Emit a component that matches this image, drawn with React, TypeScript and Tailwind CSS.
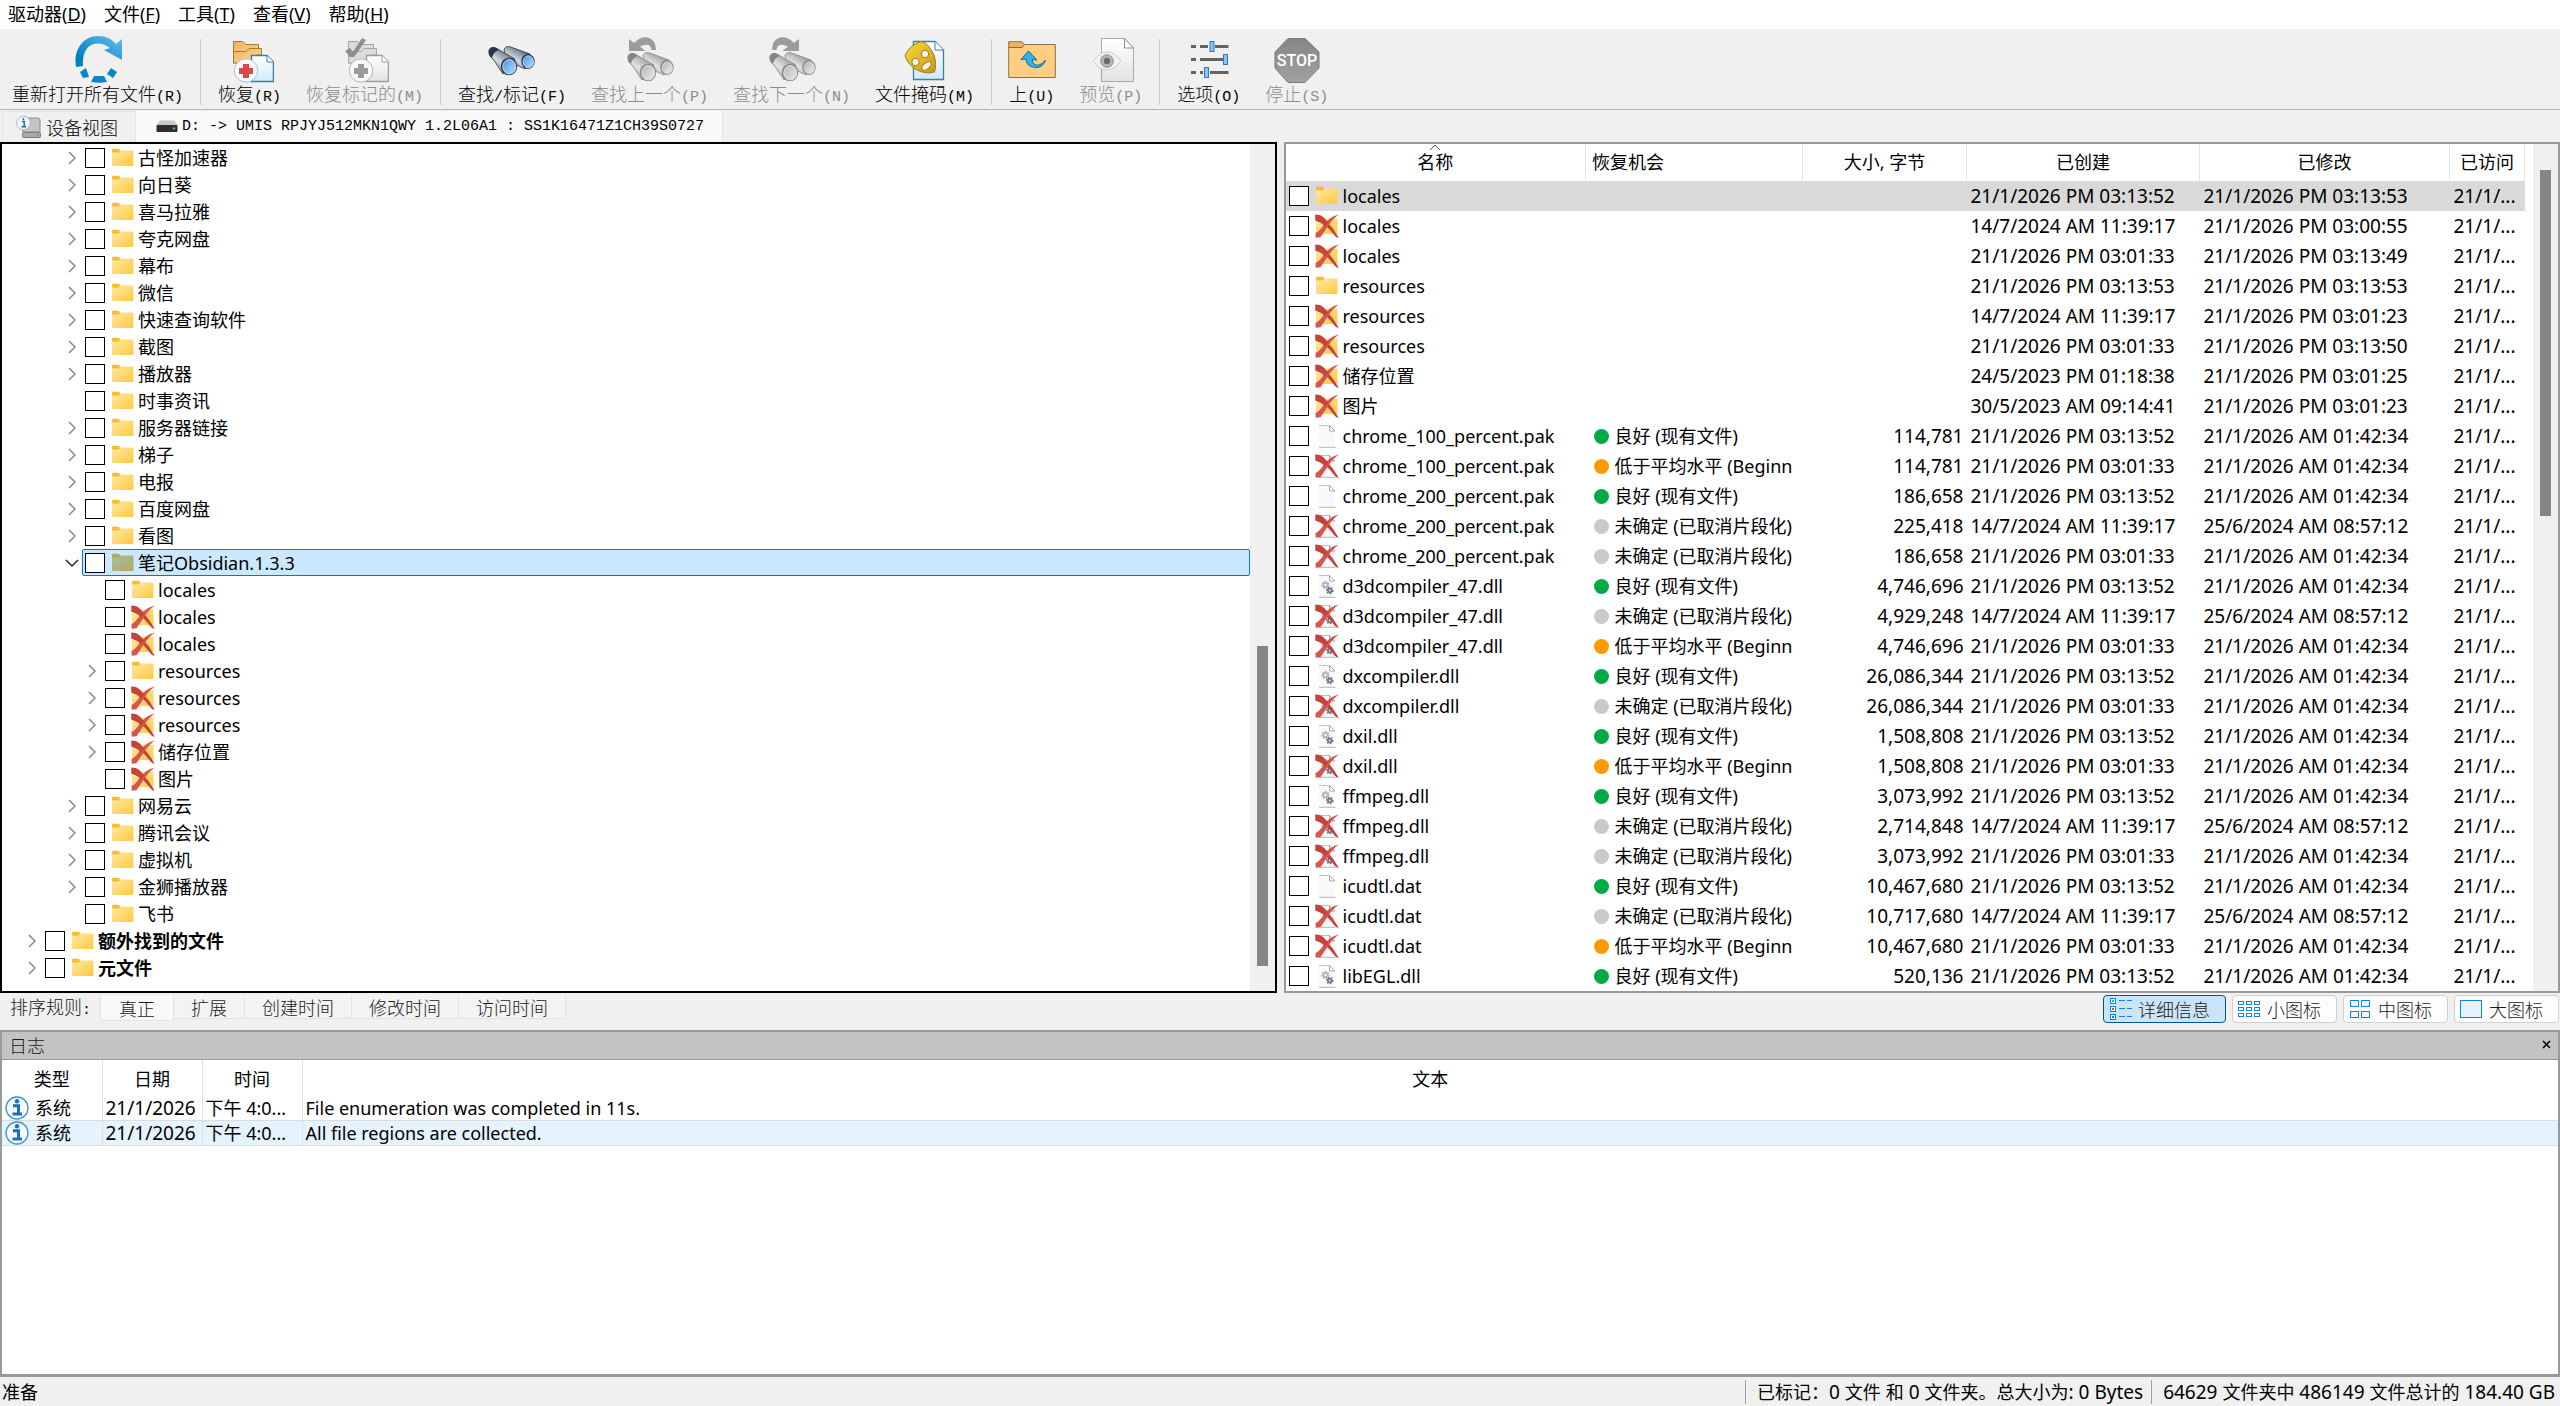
import type { ReactNode } from "react";

const UI = 'font-["Noto_Sans","Noto_Sans_CJK_SC",sans-serif]';
const BITMAP = 'font-["Noto_Sans_CJK_SC",sans-serif] text-[18px] font-light';
const MONO = 'font-["Liberation_Mono",monospace] text-[15px]';

/* Text whose Latin runs take their own face and size beside the Chinese glyphs. */
function Runs({ text, latin }: { text: string; latin: string }) {
  return (
    <>
      {text.split(/([\x20-\x7e]+)/).map((run, i) =>
        i % 2 === 1 ? (
          <span key={i} className={latin}>
            {run}
          </span>
        ) : (
          run
        ),
      )}
    </>
  );
}

function CheckBox({ label }: { label?: string }) {
  return (
    <input
      type="checkbox"
      aria-label={label}
      className="size-5 shrink-0 appearance-none border border-black bg-white checked:bg-sky-600"
    />
  );
}

/* ---------- small item icons ---------- */

type Kind = "folder" | "folderX" | "file" | "fileX" | "dll" | "dllX" | "folderSel";

function Gear({ x, y, r, c }: { x: number; y: number; r: number; c: string }) {
  return (
    <g stroke={c} fill="none">
      <circle cx={x} cy={y} r={r} strokeWidth="1.8" />
      <circle cx={x} cy={y} r={r + 1.3} strokeWidth="1.4" strokeDasharray="1.6 1.5" />
    </g>
  );
}

function ItemIcon({ kind }: { kind: Kind }) {
  const isFolder = kind.startsWith("folder");
  const crossed = kind.endsWith("X");
  return (
    <svg width="24" height="24" viewBox="0 0 24 24" className="shrink-0" aria-hidden="true">
      {isFolder && (
        <g>
          <path
            d="M1 5.5V4q0-1.200 1.200-1.200H7q1 0 1.700 1L9.500 5.500Z"
            fill={kind === "folderSel" ? "#b3a545" : "#f9b821"}
          />
          <rect
            x="1"
            y="4.500"
            width="21.500"
            height="15.500"
            rx="1"
            fill={kind === "folderSel" ? "url(#folderSelFill)" : "url(#folderFill)"}
          />
          <path d="M1 4.500H9.300Q8.500 6.500 7 6.500H2Q1 6.500 1 5.500Z" fill={kind === "folderSel" ? "#b3a545" : "#f9b821"} />
        </g>
      )}
      {!isFolder && (
        <g>
          <rect x="4" y="2" width="16" height="21" fill="#f9f9f9" />
          <path d="M13 1h7v7h-7z" fill="#fff" />
          <path d="M4 1.500h10.500M4 23.300h16.500" stroke="#c3c3c3" strokeWidth="1.200" fill="none" />
          <path d="M14.500 1.500V7H20Z" fill="#fdfdfd" stroke="#a5a5a5" />
        </g>
      )}
      {kind.startsWith("dll") && (
        <g>
          <Gear x={10.500} y={11} r={2.200} c="#a9b3bd" />
          <Gear x={14.800} y={16.500} r={1.800} c="#6e7780" />
        </g>
      )}
      {crossed && (
        <g>
          <path
            d="M0.500 0.800Q5.500 0 9.500 4.500Q18 13.500 23.800 23.800Q21.500 24 19.500 21.500Q12.500 12 5.500 8.500Q2 7 0.500 6.500Z"
            fill="#c3443b"
          />
          <path
            d="M23.800 0.500Q17.500 5 12.800 12.500Q8 19.500 5.500 23.300L0.700 23.800L0.500 19Q4.500 17.500 8.500 11Q14 3 23.800 0.500Z"
            fill="#d8554d"
          />
          <path d="M0.500 0.800Q5.500 0 9.500 4.500L13.500 9L10 12Q7 9 5.500 8.500Q2 7 0.500 6.500Z" fill="#c3443b" />
        </g>
      )}
    </svg>
  );
}

function SharedDefs() {
  return (
    <svg width="0" height="0" className="absolute" aria-hidden="true">
      <defs>
        <linearGradient id="folderFill" x1="0" y1="0" x2="1" y2="1">
          <stop offset="0" stopColor="#ffe9a6" />
          <stop offset="1" stopColor="#ffc93f" />
        </linearGradient>
        <linearGradient id="folderSelFill" x1="0" y1="0" x2="1" y2="1">
          <stop offset="0" stopColor="#a9bda5" />
          <stop offset="1" stopColor="#afab5c" />
        </linearGradient>
        <linearGradient id="arc" x1="0" y1="1" x2="1" y2="0">
          <stop offset="0.200" stopColor="#0081c2" />
          <stop offset="1" stopColor="#68bdec" />
        </linearGradient>
        <linearGradient id="tan" x1="0" y1="0" x2="1" y2="1">
          <stop offset="0" stopColor="#ecb55c" />
          <stop offset="1" stopColor="#ffd995" />
        </linearGradient>
        <linearGradient id="page" x1="0" y1="0" x2="0" y2="1">
          <stop offset="0" stopColor="#ffffff" />
          <stop offset="1" stopColor="#cfeafa" />
        </linearGradient>
        <linearGradient id="pageGray" x1="0" y1="0" x2="0" y2="1">
          <stop offset="0" stopColor="#ffffff" />
          <stop offset="1" stopColor="#e2e2e2" />
        </linearGradient>
        <linearGradient id="barrel" x1="0" y1="1" x2="0.700" y2="0">
          <stop offset="0" stopColor="#3c4555" />
          <stop offset="0.500" stopColor="#d5d9e0" />
          <stop offset="0.800" stopColor="#7f8999" />
          <stop offset="1" stopColor="#2f3a4d" />
        </linearGradient>
        <linearGradient id="barrelGray" x1="0" y1="1" x2="0.700" y2="0">
          <stop offset="0" stopColor="#7c7c7c" />
          <stop offset="0.500" stopColor="#e2e2e2" />
          <stop offset="1" stopColor="#8a8a8a" />
        </linearGradient>
        <linearGradient id="lens" x1="0" y1="0" x2="1" y2="1">
          <stop offset="0" stopColor="#3f97ea" />
          <stop offset="1" stopColor="#b5e0ff" />
        </linearGradient>
        <linearGradient id="lensGray" x1="0" y1="0" x2="1" y2="1">
          <stop offset="0" stopColor="#b4b4b4" />
          <stop offset="1" stopColor="#ededed" />
        </linearGradient>
        <linearGradient id="gold" x1="0" y1="0" x2="1" y2="1">
          <stop offset="0" stopColor="#f7dc35" />
          <stop offset="1" stopColor="#c9981c" />
        </linearGradient>
        <linearGradient id="stop" x1="0" y1="0" x2="0" y2="1">
          <stop offset="0" stopColor="#858585" />
          <stop offset="1" stopColor="#a2a2a2" />
        </linearGradient>
      </defs>
    </svg>
  );
}

/* ---------- toolbar icons ---------- */

function Icon48({ children }: { children: ReactNode }) {
  return (
    <svg width="48" height="48" viewBox="0 0 48 48" className="-mx-1 shrink-0" aria-hidden="true">
      {children}
    </svg>
  );
}

function ReopenIcon() {
  return (
    <Icon48>
      <path
        d="M2 32C-1 15 9 1 24 1C32 1 38 4 42 9L48 4V25L30 15L36 13C32 10 29 8.500 24 8.500C13 8.500 8 18 9 31Z"
        fill="url(#arc)"
      />
      <path d="M12 33L15 42L9 43L6 37Z M37 33L43 37L39 43L33 39Z M20 41H30L33 47Q25 48.500 17 47Z" fill="#0a86c6" />
    </Icon48>
  );
}

function RecoverIcon({ gray }: { gray?: boolean }) {
  const line = gray ? "#a3a3a3" : "#a87a2c";
  const fill = gray ? "#dcdcdc" : "url(#tan)";
  const blue = gray ? "#9d9d9d" : "#3d7ea8";
  return (
    <Icon48>
      <path d="M7.500 6.500H17L20 9.500H32.500V28H7.500Z" fill={fill} stroke={line} />
      <path d="M7.500 16.500H20L23 13.500H35.500V20H30L28 28H7.500Z" fill={fill} stroke={line} />
      <path d="M25.500 20.500H41L47.500 27V46.500H25.500Z" fill={gray ? "url(#pageGray)" : "url(#page)"} stroke={blue} strokeWidth="1.500" />
      <path d="M41 20.500V27H47.500" fill="#fff" stroke={blue} />
      <circle cx="20" cy="35.500" r="11.700" fill="#f8f8f8" stroke={gray ? "#b5b5b5" : "#a9c4d4"} />
      <path d="M17 29H23V33H27V39H23V43H17V39H13V33H17Z" fill={gray ? "#9a9a9a" : "#d9484c"} />
      {gray && <path d="M4 16L9 13L12 17L21 3L25 5L13 22H9Z" fill="#8d8d8d" />}
    </Icon48>
  );
}

function Binoculars({ gray }: { gray?: boolean }) {
  const body = gray ? "url(#barrelGray)" : "url(#barrel)";
  const dark = gray ? "#858585" : "#27344a";
  const lens = gray ? "url(#lensGray)" : "url(#lens)";
  return (
    <g>
      <path d="M16 3Q19 -1 24 1.500L42 8L37 23L18 14Z" fill={body} stroke={dark} strokeWidth="0.800" />
      <ellipse cx="40" cy="15.500" rx="6.700" ry="7.500" fill={dark} />
      <ellipse cx="40.300" cy="15.800" rx="5.200" ry="6" fill={lens} stroke={gray ? "#d5d5d5" : "#c7d3df"} />
      <path d="M1 4Q3 0 8 2L27 13L15 28L5 13Q0 10 1 4Z" fill={body} stroke={dark} strokeWidth="0.800" />
      <path d="M1 4Q3 0 8 2L11 4Q5 6 4 12Q0 9 1 4Z" fill={dark} />
      <ellipse cx="21" cy="20.500" rx="8.200" ry="8.800" fill={dark} />
      <ellipse cx="21.300" cy="20.800" rx="6.500" ry="7.200" fill={lens} stroke={gray ? "#e4e4e4" : "#d3dde6"} />
    </g>
  );
}

function FindIcon() {
  return (
    <Icon48>
      <g transform="translate(0 11)">
        <Binoculars />
      </g>
    </Icon48>
  );
}

function FindStepIcon({ next }: { next?: boolean }) {
  return (
    <Icon48>
      <g transform="translate(1 17)">
        <Binoculars gray />
      </g>
      <g transform={next ? "translate(34 0) scale(-1 1)" : "translate(0 0)"}>
        <path d="M3 4L8 8Q14 1.500 22 2.500Q30 5 30 15H25.500Q24.500 6.500 14 11.500L19.500 16H3Z" fill="#9b9b9b" />
      </g>
    </Icon48>
  );
}

function MaskIcon() {
  return (
    <Icon48>
      <path d="M12.500 6.500H34L42.500 15V44.500H12.500Z" fill="url(#page)" stroke="#3d7ea8" strokeWidth="1.300" />
      <path d="M34 6.500V15H42.500" fill="#fff" stroke="#3d7ea8" />
      <path d="M20 6.500Q27 7 33 20Q36 30 33.500 37Q25 40 14 34Q5 27 4 20Q10 9 20 6.500Z" fill="url(#gold)" stroke="#a57d16" />
      <circle cx="24" cy="19" r="3.700" fill="#f5f5f0" stroke="#a57d16" />
      <circle cx="14.500" cy="27" r="3.700" fill="#f5f5f0" stroke="#a57d16" />
      <ellipse cx="25.500" cy="31" rx="5.500" ry="3" transform="rotate(-40 25.500 31)" fill="#f5f5f0" stroke="#a57d16" />
    </Icon48>
  );
}

function UpIcon() {
  return (
    <Icon48>
      <path d="M0.700 6.700H14L16.500 9.500L14 13H0.700Z" fill="#f0b062" stroke="#93703a" />
      <path d="M0.700 12.500H14L17 9.500H47.300V42.500H0.700Z" fill="#ffce83" stroke="#93703a" />
      <path d="M20.500 16L29 25L24 24.500Q25 31 31 30Q35 29 37.500 25Q35 33 28 32.500Q18 32 18 24L13 24.500Z" fill="#2fb4ea" stroke="#17699a" />
    </Icon48>
  );
}

function PreviewIcon() {
  return (
    <Icon48>
      <path d="M14.500 3.500H37.500L46.500 13V46.500H14.500Z" fill="url(#pageGray)" stroke="#a8a8a8" />
      <path d="M37.500 3.500V13H46.500Z" fill="#fff" stroke="#8f8f8f" />
      <path d="M6 26Q13 17 20 17Q27 17 34 26Q27 35 20 35Q13 35 6 26Z" fill="#f3f3f3" stroke="#cdcdcd" />
      <circle cx="20" cy="26" r="6.300" fill="#b5b5b5" stroke="#8e8e8e" />
      <circle cx="20" cy="26" r="3.200" fill="#6b6b6b" />
    </Icon48>
  );
}

function OptionsIcon() {
  return (
    <Icon48>
      <path
        d="M6 11.500H11M15 11.500H23M30 11.500H43.500M6 24.500H11M15 24.500H38M6 37.500H11M15 37.500H18M25 37.500H43.500"
        stroke="#636363"
        strokeWidth="3"
      />
      <g fill="#86c5ff" stroke="#3577b4">
        <rect x="25" y="6.500" width="4" height="10" />
        <rect x="38.500" y="19.500" width="4" height="10" />
        <rect x="19.500" y="32.500" width="4" height="10" />
      </g>
    </Icon48>
  );
}

function StopIcon() {
  return (
    <Icon48>
      <path d="M15 3.500H32L46 17V33L32 47.500H15L2 33V17Z" fill="url(#stop)" stroke="#7b7b7b" />
      <text
        x="24"
        y="31"
        textAnchor="middle"
        fill="#fff"
        className='font-["Roboto",sans-serif] text-[16px] font-medium'
      >
        STOP
      </text>
    </Icon48>
  );
}

function ToolButton({ icon, label, disabled }: { icon: ReactNode; label: string; disabled?: boolean }) {
  return (
    <button
      type="button"
      disabled={disabled}
      className={`flex flex-col items-center px-3 leading-5 whitespace-nowrap text-black disabled:text-[#8c8c8c] ${BITMAP}`}
    >
      {icon}
      <span>
        <Runs text={label} latin={MONO} />
      </span>
    </button>
  );
}

function ToolSeparator() {
  return <div className="mx-1 my-1 w-px bg-[#cdcdcd]" />;
}

/* ---------- data ---------- */

type Node = { name: string; depth: number; open?: boolean; arrow?: boolean; kind?: Kind; bold?: boolean };

const tree: Node[] = [
  { name: "古怪加速器", depth: 2, arrow: true },
  { name: "向日葵", depth: 2, arrow: true },
  { name: "喜马拉雅", depth: 2, arrow: true },
  { name: "夸克网盘", depth: 2, arrow: true },
  { name: "幕布", depth: 2, arrow: true },
  { name: "微信", depth: 2, arrow: true },
  { name: "快速查询软件", depth: 2, arrow: true },
  { name: "截图", depth: 2, arrow: true },
  { name: "播放器", depth: 2, arrow: true },
  { name: "时事资讯", depth: 2 },
  { name: "服务器链接", depth: 2, arrow: true },
  { name: "梯子", depth: 2, arrow: true },
  { name: "电报", depth: 2, arrow: true },
  { name: "百度网盘", depth: 2, arrow: true },
  { name: "看图", depth: 2, arrow: true },
  { name: "笔记Obsidian.1.3.3", depth: 2, arrow: true, open: true, kind: "folderSel" },
  { name: "locales", depth: 3 },
  { name: "locales", depth: 3, kind: "folderX" },
  { name: "locales", depth: 3, kind: "folderX" },
  { name: "resources", depth: 3, arrow: true },
  { name: "resources", depth: 3, arrow: true, kind: "folderX" },
  { name: "resources", depth: 3, arrow: true, kind: "folderX" },
  { name: "储存位置", depth: 3, arrow: true, kind: "folderX" },
  { name: "图片", depth: 3, kind: "folderX" },
  { name: "网易云", depth: 2, arrow: true },
  { name: "腾讯会议", depth: 2, arrow: true },
  { name: "虚拟机", depth: 2, arrow: true },
  { name: "金狮播放器", depth: 2, arrow: true },
  { name: "飞书", depth: 2 },
  { name: "额外找到的文件", depth: 0, arrow: true, bold: true },
  { name: "元文件", depth: 0, arrow: true, bold: true },
];

const indents = ["pl-5", "pl-10", "pl-[60px]", "pl-20"];

type Chance = "good" | "low" | "unknown";
const chanceText: Record<Chance, string> = {
  good: "良好 (现有文件)",
  low: "低于平均水平 (Beginn",
  unknown: "未确定 (已取消片段化)",
};
const chanceDot: Record<Chance, string> = {
  good: "bg-[#00aa44]",
  low: "bg-[#ff9900]",
  unknown: "bg-[#c9c9c9]",
};

type Row = [string, Kind, Chance | null, string, string, string];
const A = "21/1/2026 PM 03:13:52";
const B = "21/1/2026 PM 03:01:33";
const C = "14/7/2024 AM 11:39:17";
const M = "21/1/2026 AM 01:42:34";
const N = "25/6/2024 AM 08:57:12";

const files: Row[] = [
  ["locales", "folder", null, "", A, "21/1/2026 PM 03:13:53"],
  ["locales", "folderX", null, "", C, "21/1/2026 PM 03:00:55"],
  ["locales", "folderX", null, "", B, "21/1/2026 PM 03:13:49"],
  ["resources", "folder", null, "", "21/1/2026 PM 03:13:53", "21/1/2026 PM 03:13:53"],
  ["resources", "folderX", null, "", C, "21/1/2026 PM 03:01:23"],
  ["resources", "folderX", null, "", B, "21/1/2026 PM 03:13:50"],
  ["储存位置", "folderX", null, "", "24/5/2023 PM 01:18:38", "21/1/2026 PM 03:01:25"],
  ["图片", "folderX", null, "", "30/5/2023 AM 09:14:41", "21/1/2026 PM 03:01:23"],
  ["chrome_100_percent.pak", "file", "good", "114,781", A, M],
  ["chrome_100_percent.pak", "fileX", "low", "114,781", B, M],
  ["chrome_200_percent.pak", "file", "good", "186,658", A, M],
  ["chrome_200_percent.pak", "fileX", "unknown", "225,418", C, N],
  ["chrome_200_percent.pak", "fileX", "unknown", "186,658", B, M],
  ["d3dcompiler_47.dll", "dll", "good", "4,746,696", A, M],
  ["d3dcompiler_47.dll", "dllX", "unknown", "4,929,248", C, N],
  ["d3dcompiler_47.dll", "dllX", "low", "4,746,696", B, M],
  ["dxcompiler.dll", "dll", "good", "26,086,344", A, M],
  ["dxcompiler.dll", "dllX", "unknown", "26,086,344", B, M],
  ["dxil.dll", "dll", "good", "1,508,808", A, M],
  ["dxil.dll", "dllX", "low", "1,508,808", B, M],
  ["ffmpeg.dll", "dll", "good", "3,073,992", A, M],
  ["ffmpeg.dll", "dllX", "unknown", "2,714,848", C, N],
  ["ffmpeg.dll", "dllX", "unknown", "3,073,992", B, M],
  ["icudtl.dat", "file", "good", "10,467,680", A, M],
  ["icudtl.dat", "fileX", "unknown", "10,717,680", C, N],
  ["icudtl.dat", "fileX", "low", "10,467,680", B, M],
  ["libEGL.dll", "dll", "good", "520,136", A, M],
];

/* ---------- sections ---------- */

function MenuBar() {
  const items = [
    ["驱动器", "D"],
    ["文件", "F"],
    ["工具", "T"],
    ["查看", "V"],
    ["帮助", "H"],
  ];
  return (
    <nav className="flex h-[31px] gap-[18px] border-b-2 border-[#f0f0f0] bg-white px-2 pb-px text-[18px]">
      {items.map(([name, key]) => (
        <button type="button" key={key} className="whitespace-nowrap">
          {name}(<u>{key}</u>)
        </button>
      ))}
    </nav>
  );
}

function Toolbar() {
  return (
    <div className="flex h-[79px] gap-px overflow-hidden border-b border-[#b4b4b4] bg-[#f0f0f0] pt-1">
      <ToolButton icon={<ReopenIcon />} label="重新打开所有文件(R)" />
      <ToolSeparator />
      <ToolButton icon={<RecoverIcon />} label="恢复(R)" />
      <ToolButton icon={<RecoverIcon gray />} label="恢复标记的(M)" disabled />
      <ToolSeparator />
      <ToolButton icon={<FindIcon />} label="查找/标记(F)" />
      <ToolButton icon={<FindStepIcon />} label="查找上一个(P)" disabled />
      <ToolButton icon={<FindStepIcon next />} label="查找下一个(N)" disabled />
      <ToolButton icon={<MaskIcon />} label="文件掩码(M)" />
      <ToolSeparator />
      <ToolButton icon={<UpIcon />} label="上(U)" />
      <ToolButton icon={<PreviewIcon />} label="预览(P)" disabled />
      <ToolSeparator />
      <ToolButton icon={<OptionsIcon />} label="选项(O)" />
      <ToolButton icon={<StopIcon />} label="停止(S)" disabled />
    </div>
  );
}

function DriveTabs() {
  return (
    <div className={`flex h-8 bg-[#f0f0f0] pt-px pl-[2px] leading-5 ${BITMAP}`}>
      <button type="button" className="flex items-center gap-1 border border-b-0 border-[#e4e4e4] pr-[17px] pl-[13px]">
        <svg width="26" height="24" viewBox="0 0 26 24" aria-hidden="true">
          <path d="M9 3H22Q24 3 24 5V17H7V5Z" fill="#c4c4c4" stroke="#8c8c8c" />
          <rect x="6.500" y="17.500" width="18" height="5" rx="1" fill="#aaa" stroke="#7d7d7d" />
          <circle cx="21.500" cy="20" r="1" fill="#43c043" />
          <circle cx="7.500" cy="8" r="6.800" fill="#f3f8fb" stroke="#9dbdd0" />
          <path d="M6 6.500H8.200V11.500M5.500 11.800H10M7.500 3V5" stroke="#1c6ea4" strokeWidth="1.500" fill="none" />
        </svg>
        设备视图
      </button>
      <button type="button" className="flex items-center gap-1 border-r border-[#e4e4e4] bg-[#f9f9f9] pr-[18px] pl-5">
        <svg width="22" height="14" viewBox="0 0 22 14" aria-hidden="true">
          <path d="M4 0.500H18L21.500 5H0.500Z" fill="#c9c9c9" />
          <rect x="0.500" y="5" width="21" height="7" rx="1" fill="#2e2e2e" />
          <circle cx="18" cy="8.500" r="1.200" fill="#46d246" />
        </svg>
        <Runs text="D: -> UMIS RPJYJ512MKN1QWY 1.2L06A1 : SS1K16471Z1CH39S0727" latin={MONO} />
      </button>
    </div>
  );
}

function TreeRow({ node }: { node: Node }) {
  const selected = node.open;
  return (
    <li className={`flex h-[27px] items-center ${indents[node.depth]}`}>
      {node.arrow ? (
        <button type="button" aria-label="展开" className="flex w-5 shrink-0 justify-center">
          <svg width="14" height="14" viewBox="0 0 14 14" fill="none" aria-hidden="true">
            {selected ? (
              <path d="M1 4L7 10L13 4" stroke="#262626" strokeWidth="1.500" />
            ) : (
              <path d="M4 1L10 7L4 13" stroke="#8c8c8c" strokeWidth="1.500" />
            )}
          </svg>
        </button>
      ) : (
        <span className="w-5 shrink-0" />
      )}
      <label
        className={`flex h-full min-w-0 flex-1 items-center border pl-[2px] whitespace-nowrap ${
          selected ? "rounded-xs border-[#0078d7] bg-[#cce8ff]" : "border-transparent"
        } ${node.bold ? "font-bold" : ""}`}
      >
        <CheckBox />
        <span className="ml-1.5 flex items-center gap-[3px]">
          <ItemIcon kind={node.kind ?? "folder"} />
          <span>{node.name}</span>
        </span>
      </label>
    </li>
  );
}

function TreePanel() {
  return (
    <section className="flex min-w-0 flex-1 border-2 border-black bg-white">
      <ul className="min-w-0 flex-1 overflow-hidden text-[18px] leading-6">
        {tree.map((node, i) => (
          <TreeRow key={i} node={node} />
        ))}
      </ul>
      <div className="flex w-[25px] flex-col bg-[#f0f0f0] px-[7px]">
        <div className="mt-[502px] h-80 bg-[#858585]" />
      </div>
    </section>
  );
}

function FilePanel() {
  const head = "relative overflow-hidden border-r border-[#e5e5e5] pb-0.5 font-normal";
  const cell = "overflow-hidden pl-1 text-[19px] whitespace-nowrap";
  return (
    <section className="flex min-w-0 flex-1 border-2 border-[#999] bg-white">
      <div className="min-w-0 flex-1 overflow-hidden">
        <table className="w-full table-fixed border-collapse text-[18px] leading-6">
          <colgroup>
            <col className="w-[300px]" />
            <col className="w-[217px]" />
            <col className="w-[164px]" />
            <col className="w-[233px]" />
            <col className="w-[250px]" />
            <col className="w-[75px]" />
            <col />
          </colgroup>
          <thead>
            <tr className="h-[37px]">
              <th className={head}>
                名称
                <svg width="12" height="7" viewBox="0 0 12 7" fill="none" className="absolute top-0 left-1/2 -ml-1.5" aria-hidden="true">
                  <path d="M1 6L6 1L11 6" stroke="#555" />
                </svg>
              </th>
              <th className={`${head} pl-1.5 text-left`}>恢复机会</th>
              <th className={head}>大小, 字节</th>
              <th className={head}>已创建</th>
              <th className={head}>已修改</th>
              <th className={head}>已访问</th>
              <th />
            </tr>
          </thead>
          <tbody>
            {files.map(([name, kind, chance, size, created, modified], i) => {
              const tint = i === 0 ? "bg-[#d9d9d9]" : "";
              return (
                <tr key={i} className="h-[30px]">
                  <td className={tint}>
                    <label className="flex items-center pl-[3px] whitespace-nowrap">
                      <CheckBox />
                      <span className="ml-1.5 flex items-center gap-1">
                        <ItemIcon kind={kind} />
                        <span>{name}</span>
                      </span>
                    </label>
                  </td>
                  <td className={`overflow-hidden ${tint}`}>
                    {chance && (
                      <span className="flex items-center gap-1.5 pl-2 whitespace-nowrap">
                        <span className={`size-[15px] shrink-0 rounded-full ${chanceDot[chance]}`} />
                        {chanceText[chance]}
                      </span>
                    )}
                  </td>
                  <td className={`overflow-hidden pr-[3px] text-right text-[19px] ${tint}`}>{size}</td>
                  <td className={`${cell} ${tint}`}>{created}</td>
                  <td className={`${cell} ${tint}`}>{modified}</td>
                  <td className={`${cell} ${tint}`}>21/1/...</td>
                  <td />
                </tr>
              );
            })}
          </tbody>
        </table>
      </div>
      <div className="flex w-[25px] flex-col bg-[#f0f0f0] px-[7px]">
        <div className="mt-[26px] h-[346px] bg-[#858585]" />
      </div>
    </section>
  );
}

function ViewIcon({ type }: { type: number }) {
  return (
    <svg width="24" height="24" viewBox="0 0 24 24" fill="none" stroke="#0a84f0" className="shrink-0" aria-hidden="true">
      {type === 0 &&
        [1, 9, 17].map((y, i) => (
          <g key={y}>
            <rect x="1.500" y={y + 0.500} width="5" height="5" fill="#fff" />
            <rect x="3" y={y + 2} width="2" height="2" stroke="none" fill={["#43c043", "#e0501e", "#0a84f0"][i]} />
            <path d={`M10 ${y + 2.500}H16M18 ${y + 2.500}H23`} />
          </g>
        ))}
      {type === 1 &&
        [4, 10, 16].map((y) => [0, 8, 16].map((x) => <rect key={`${x}-${y}`} x={x + 0.500} y={y + 0.500} width="5" height="3" fill="#fff" />))}
      {type === 2 &&
        [3, 14].map((y) => [1, 12].map((x) => <rect key={`${x}-${y}`} x={x + 0.500} y={y + 0.500} width="8" height="6" fill="#eef6ff" />))}
      {type === 3 && <rect x="0.500" y="3.500" width="21" height="17" fill="#e6f2fe" />}
    </svg>
  );
}

function SortAndViewBar() {
  return (
    <div className={`flex h-[37px] items-start justify-between bg-[#f0f0f0] pt-0.5 leading-5 text-[#1a1a1a] ${BITMAP}`}>
      <div className="flex items-start pl-2.5">
        <span className="w-[90px] pt-px whitespace-nowrap">
          排序规则<span className={MONO}>:</span>
        </span>
        {["真正", "扩展", "创建时间", "修改时间", "访问时间"].map((t, i) => (
          <button
            type="button"
            key={t}
            className={`border-r border-b border-[#e3e3e3] pt-px whitespace-nowrap ${
              i === 0 ? "h-[26px] border-l bg-[#f9f9f9] px-[18px]" : "h-6 bg-[#f3f3f3] px-[17px]"
            }`}
          >
            {t}
          </button>
        ))}
      </div>
      <div className="flex gap-1.5 pr-px">
        {["详细信息", "小图标", "中图标", "大图标"].map((t, i) => (
          <button
            type="button"
            key={t}
            className={`flex h-7 items-center gap-[5px] rounded-sm border pr-[15px] pl-[5px] whitespace-nowrap ${
              i === 0 ? "border-[#005499] bg-[#cce4f7]" : "border-[#d0d0d0] bg-[#fdfdfd]"
            }`}
          >
            <ViewIcon type={i} />
            {t}
          </button>
        ))}
      </div>
    </div>
  );
}

function InfoIcon() {
  return (
    <svg width="24" height="24" viewBox="0 0 24 24" className="shrink-0" aria-hidden="true">
      <circle cx="12" cy="12" r="11" fill="#f7fbff" stroke="#3f93c9" strokeWidth="1.300" />
      <path d="M8 9.800H13.500V17.500M7.500 18H17" fill="none" stroke="#1b6fc0" strokeWidth="3" />
      <circle cx="12" cy="5.300" r="2.200" fill="#1b6fc0" />
    </svg>
  );
}

function LogPanel() {
  const line = "border-r border-[#e0e0e0]";
  const head = "font-normal pt-0.5";
  return (
    <section className="flex flex-1 flex-col border-2 border-b-[3px] border-[#999] bg-white">
      <header className="flex h-7 items-center justify-between border-b border-[#999] bg-[#c3c3c3] px-[7px] pb-0.5">
        <h2 className={`leading-5 text-[#1a1a1a] ${BITMAP}`}>日志</h2>
        <button type="button" aria-label="关闭">
          <svg width="9" height="9" viewBox="0 0 9 9" aria-hidden="true">
            <path d="M1 1L8 8M8 1L1 8" stroke="#000" strokeWidth="1.600" />
          </svg>
        </button>
      </header>
      <table className="w-full table-fixed border-collapse text-[18px] leading-[23px]">
        <colgroup>
          <col className="w-[100px]" />
          <col className="w-[100px]" />
          <col className="w-[100px]" />
          <col />
        </colgroup>
        <thead>
          <tr className="h-9">
            <th className={`${line} ${head}`}>类型</th>
            <th className={`${line} ${head}`}>日期</th>
            <th className={`${line} ${head}`}>时间</th>
            <th className={head}>文本</th>
          </tr>
        </thead>
        <tbody>
          {["File enumeration was completed in 11s.", "All file regions are collected."].map((t, i) => (
            <tr key={t} className={`h-6 border-b border-[#dcdcdc] ${i === 1 ? "bg-[#e5f3ff]" : ""}`}>
              <td className={line}>
                <span className="flex h-6 items-center gap-1.5 pl-[3px]">
                  <InfoIcon />
                  系统
                </span>
              </td>
              <td className={`${line} overflow-hidden pl-[3px] text-[19px]`}>21/1/2026</td>
              <td className={`${line} overflow-hidden pl-[3px] whitespace-nowrap`}>下午 4:0...</td>
              <td className="pl-[3px]">{t}</td>
            </tr>
          ))}
        </tbody>
      </table>
    </section>
  );
}

function StatusBar() {
  return (
    <footer className="flex h-[29px] items-center justify-between bg-[#f0f0f0] pl-[2px] text-[18px] leading-6">
      <span>准备</span>
      <div className="flex whitespace-nowrap">
        <span className="border-l border-[#a0a0a0] pr-2 pl-[11px]">
          <Runs text="已标记：0 文件 和 0 文件夹。总大小为: 0 Bytes" latin="text-[19px]" />
        </span>
        <span className="border-l border-[#a0a0a0] pr-[5px] pl-[11px]">
          <Runs text="64629 文件夹中 486149 文件总计的 184.40 GB" latin="text-[19px]" />
        </span>
      </div>
    </footer>
  );
}

export default function App() {
  return (
    <div lang="zh-CN" className={`flex min-h-screen flex-col bg-[#f0f0f0] text-black ${UI}`}>
      <SharedDefs />
      <MenuBar />
      <Toolbar />
      <DriveTabs />
      <main className="flex gap-[7px]">
        <TreePanel />
        <FilePanel />
      </main>
      <SortAndViewBar />
      <LogPanel />
      <StatusBar />
    </div>
  );
}
